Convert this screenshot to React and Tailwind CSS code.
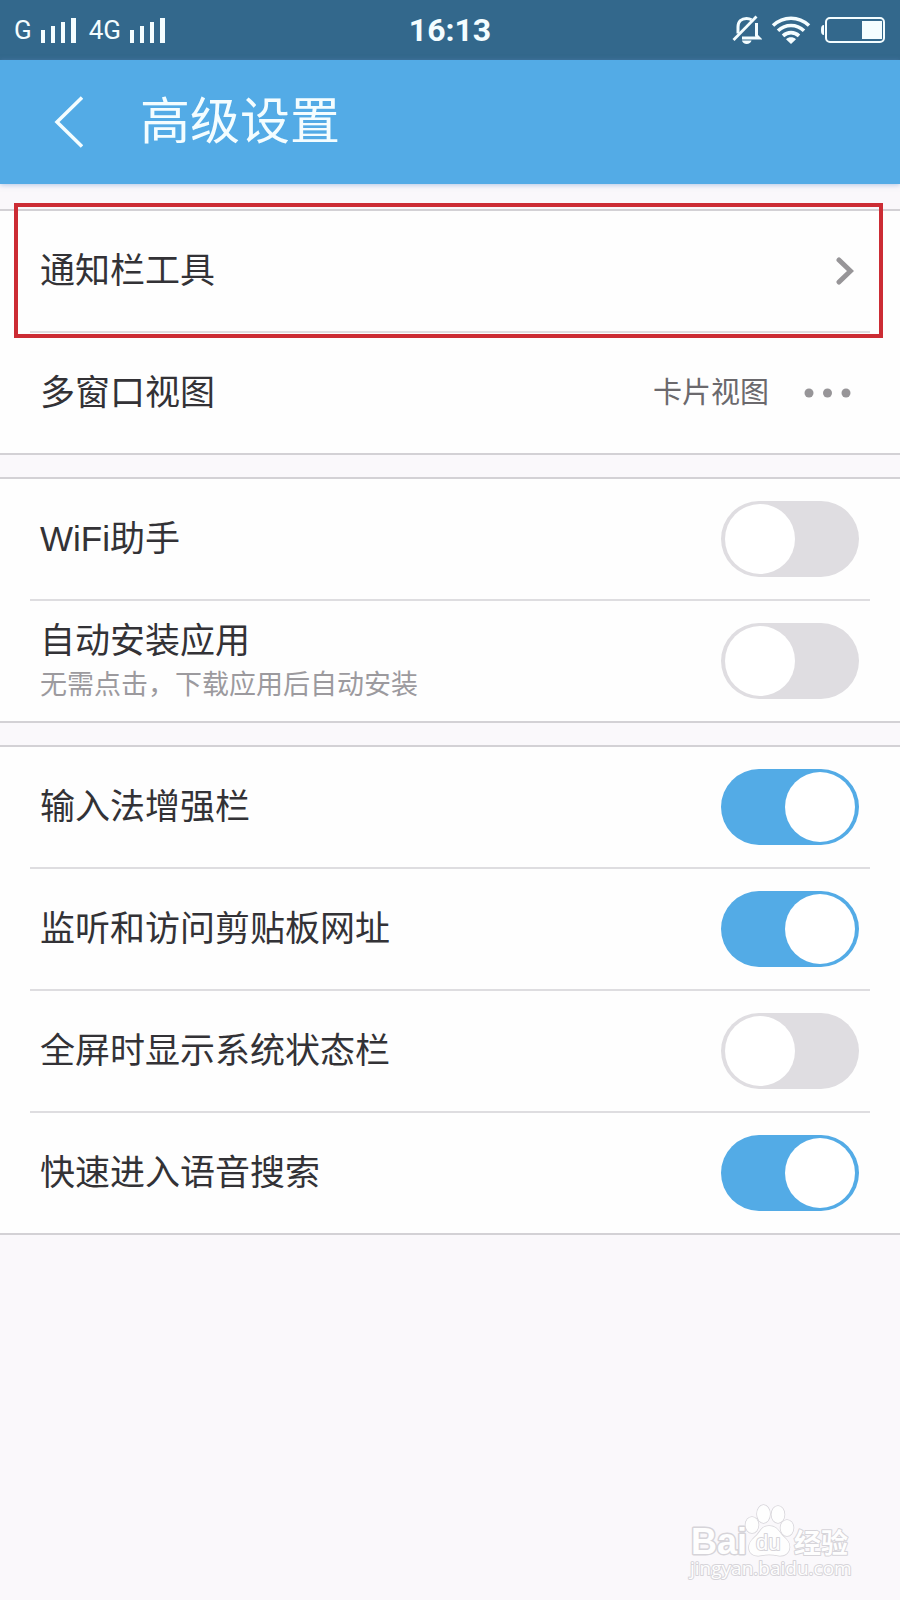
import { useState } from "react";
import clsx from "clsx";

const NETWORK_GROUP = [
  { id: "wifi", title: "WiFi助手" },
  { id: "autoInstall", title: "自动安装应用", hint: "无需点击，下载应用后自动安装" },
];

const BROWSING_GROUP = [
  { id: "inputBar", title: "输入法增强栏" },
  { id: "clipboard", title: "监听和访问剪贴板网址" },
  { id: "fullscreen", title: "全屏时显示系统状态栏" },
  { id: "voice", title: "快速进入语音搜索" },
];

const SignalBars = () => (
  <svg width="35" height="27" viewBox="0 0 35 27" fill="currentColor" aria-hidden="true">
    <rect x="0" y="13" width="4" height="13" />
    <rect x="10" y="9" width="4" height="17" />
    <rect x="20" y="5" width="4" height="21" />
    <rect x="30" y="1" width="5" height="25" />
  </svg>
);

const MutedBell = () => (
  <svg width="30" height="30" viewBox="0 0 30 30" fill="none" stroke="currentColor" strokeWidth="3" aria-hidden="true">
    <path d="M6 18.500V12C6 6.500 9.500 3.500 14.500 3.500c2 0 3.600.4 5 1.300" />
    <path d="M24.500 8v12.500l2.500 2.500H10" />
    <path d="M1.500 25 24.500 1.500" strokeWidth="2.800" />
    <path d="M10 25.500h9.500c-.5 2.300-2.400 3.500-4.800 3.500s-4.200-1.200-4.700-3.500Z" fill="currentColor" stroke="none" />
  </svg>
);

const Wifi = () => (
  <svg width="40" height="30" viewBox="0 0 40 30" fill="none" stroke="currentColor" strokeWidth="3.600" aria-hidden="true">
    <path d="M2 10.500C12.500.8 27.500.8 38 10.500" />
    <path d="M7 15.800c7.500-7 18.500-7 26 0" />
    <path d="M12 20.800c4.700-4.300 11.300-4.300 16 0" />
    <path d="M15 24.200c3-2.600 7-2.600 10 0L20 29Z" fill="currentColor" stroke="none" />
  </svg>
);

const Battery = () => (
  <svg width="66" height="28" viewBox="0 0 66 28" fill="none" aria-hidden="true">
    <path d="M4 9C1.700 9 1 10.500 1 14s.7 5 3 5Z" fill="currentColor" />
    <rect x="6" y="2" width="58" height="24" rx="4" stroke="currentColor" strokeWidth="2" />
    <rect x="42" y="5" width="20" height="18" fill="currentColor" />
  </svg>
);

const StatusBar = () => (
  <div className="grid h-[60px] grid-cols-[1fr_auto_1fr] items-center bg-[#33688c] px-[14px] font-['Roboto',sans-serif] text-[26px] text-[#f4fdff]">
    <div className="flex items-center gap-[9px]">
      <span>G</span>
      <SignalBars />
      <span className="ml-1">4G</span>
      <SignalBars />
    </div>
    <time className="text-[32px] font-bold">16:13</time>
    <div className="flex items-center justify-end gap-[9px]">
      <MutedBell />
      <Wifi />
      <Battery />
    </div>
  </div>
);

const TitleBar = () => (
  <header className="flex h-[124px] items-center bg-[#53abe6] pl-[54px] text-[#f4fdff] shadow-[0_1px_5px_rgba(110,150,210,0.5)]">
    <button type="button" aria-label="返回" className="mr-[57px]">
      <svg width="29" height="52" viewBox="0 0 29 52" fill="none" stroke="currentColor" strokeWidth="3.500" aria-hidden="true">
        <path d="M28 1.500 3 26 28 50.500" />
      </svg>
    </button>
    <h1 className="text-[50px] leading-[60px]">高级设置</h1>
  </header>
);

const Group = ({ children }) => (
  <section className="border-y-2 border-[#d3d1d5] bg-[#fefefe]">{children}</section>
);

const Divider = () => <hr className="mx-[30px] border-0 border-t-2 border-[#dedde0]" />;

const ToggleRow = ({ id, title, hint, checked, onChange }) => (
  <div className="flex min-h-[120px] items-center justify-between pl-10 pr-[41px]">
    <label htmlFor={id}>
      <span className="block text-[35px] leading-[48px]">{title}</span>
      {hint && <span className="block text-[27px] leading-[40px] text-[#9c9a9e]">{hint}</span>}
    </label>
    <input
      id={id}
      type="checkbox"
      role="switch"
      checked={checked}
      onChange={() => onChange(id)}
      className={clsx(
        "flex h-[76px] w-[138px] shrink-0 cursor-pointer appearance-none items-center rounded-full bg-[#dfdde1] px-1 transition-colors",
        "before:size-[70px] before:rounded-full before:bg-white before:content-['']",
        "checked:justify-end checked:bg-[#53abe6]"
      )}
    />
  </div>
);

const ToggleGroup = ({ items, values, onChange }) => (
  <Group>
    {items.map((item, index) => (
      <div key={item.id}>
        {index > 0 && <Divider />}
        <ToggleRow {...item} checked={values[item.id]} onChange={onChange} />
      </div>
    ))}
  </Group>
);

const Watermark = () => (
  <svg width="166" height="84" viewBox="0 0 166 84" role="img" aria-label="Baidu 经验" className="overflow-visible">
    <g fill="#fefefe" stroke="#d6d4d9" strokeWidth="3" paintOrder="stroke" strokeLinejoin="round">
      <text x="1" y="52" fontSize="36" className="font-['Liberation_Sans',sans-serif] font-bold">Bai</text>
      <g strokeWidth="1.500">
        <ellipse cx="62" cy="23" rx="6.500" ry="8" />
        <ellipse cx="73.500" cy="12" rx="6.500" ry="9" />
        <ellipse cx="88" cy="12.500" rx="6.500" ry="8.500" />
        <ellipse cx="97" cy="26" rx="6.500" ry="8" />
        <path d="M79 24c7 0 9 4 12.500 8.500C95 36.500 100 39 99.500 45.500 99 52 93.500 54.500 88 53.500c-6-1.200-12-1.200-18 0-6 1-11-2-11-8 0-6.500 5-9 8.500-13C71 28 72.500 24 79 24Z" />
      </g>
      <text x="66" y="48" fontSize="22" strokeWidth="2" className="font-['Liberation_Sans',sans-serif]">du</text>
      <text x="104" y="51" fontSize="27" strokeWidth="2" className="font-['Noto_Sans_CJK_SC',sans-serif] font-bold">经验</text>
      <text x="0" y="73" fontSize="19" strokeWidth="2" className="font-['Open_Sans',sans-serif]">jingyan.baidu.com</text>
    </g>
  </svg>
);

export default function App() {
  const [values, setValues] = useState({
    wifi: false,
    autoInstall: false,
    inputBar: true,
    clipboard: true,
    fullscreen: false,
    voice: true,
  });

  const toggle = (id) => setValues((prev) => ({ ...prev, [id]: !prev[id] }));

  return (
    <div className="flex min-h-screen flex-col bg-[#faf8fb] font-['Liberation_Sans','Noto_Sans_CJK_SC',sans-serif] text-[#333236]">
      <StatusBar />
      <TitleBar />

      <main className="mt-[25px] flex flex-col gap-[22px]">
        <Group>
          <div className="relative">
            <button type="button" className="flex min-h-[120px] w-full items-center justify-between pl-10 pr-[46px] text-left">
              <span className="text-[35px] leading-[48px]">通知栏工具</span>
              <svg width="18" height="28" viewBox="0 0 18 28" fill="none" stroke="#979598" strokeWidth="5" strokeLinecap="round" aria-hidden="true">
                <path d="M3 3 14.500 14 3 25" />
              </svg>
            </button>
            <Divider />
            {/* highlight frame around the first entry */}
            <div className="pointer-events-none absolute -bottom-[5px] -top-2 left-[14px] right-[17px] border-4 border-[#cc2c34]" />
          </div>
          <button type="button" className="flex min-h-[120px] w-full items-center pl-10 pr-[49px] text-left">
            <span className="flex-1 text-[35px] leading-[48px]">多窗口视图</span>
            <span className="text-[29px] leading-[42px] text-[#6b696d]">卡片视图</span>
            <svg width="47" height="10" viewBox="0 0 47 10" fill="#979598" className="ml-[35px]" aria-hidden="true">
              <circle cx="5" cy="5" r="4.500" />
              <circle cx="23.500" cy="5" r="4.500" />
              <circle cx="42" cy="5" r="4.500" />
            </svg>
          </button>
        </Group>

        <ToggleGroup items={NETWORK_GROUP} values={values} onChange={toggle} />
        <ToggleGroup items={BROWSING_GROUP} values={values} onChange={toggle} />
      </main>

      <footer className="mt-auto flex justify-end pb-[14px] pr-[44px]">
        <Watermark />
      </footer>
    </div>
  );
}
